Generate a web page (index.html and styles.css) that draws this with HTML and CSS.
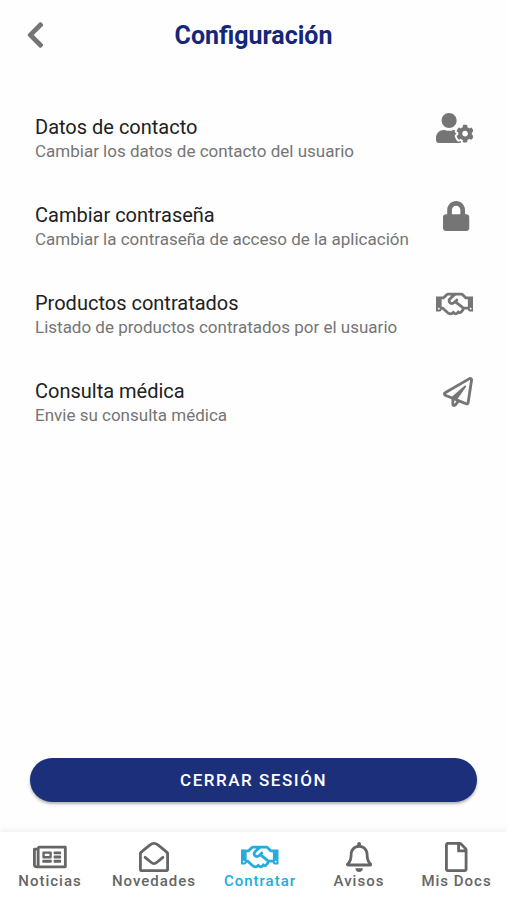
FILE: index.html
```html
<!DOCTYPE html>
<html lang="es">
<head>
    <meta charset="UTF-8">
    <meta name="viewport" content="width=device-width, initial-scale=1.0">
    <title>Configuración</title>
    <link rel="stylesheet" href="styles.css">
</head>
<body>
    <header class="header">
        <button type="button" class="back" aria-label="Volver">
            <svg class="icon" viewBox="0 0 320 512"><path d="M34.52 239.03L228.87 44.69c9.37-9.37 24.57-9.37 33.94 0l22.67 22.67c9.36 9.36 9.37 24.52.04 33.9L131.49 256l154.02 154.75c9.34 9.38 9.32 24.54-.04 33.9l-22.67 22.67c-9.37 9.37-24.57 9.37-33.94 0L34.52 272.97c-9.37-9.37-9.37-24.57 0-33.94z"/></svg>
        </button>
        <h1>Configuración</h1>
    </header>

    <main class="content">
        <nav class="options" aria-label="Opciones">
            <a class="option" href="#contacto">
                <span class="option-text">
                    <span class="option-title">Datos de contacto</span>
                    <span class="option-detail">Cambiar los datos de contacto del usuario</span>
                </span>
                <svg class="icon" viewBox="0 0 640 512"><path d="M610.5 373.3c2.6-14.1 2.6-28.5 0-42.6l25.8-14.9c3-1.7 4.3-5.2 3.3-8.5-6.7-21.6-18.2-41.2-33.2-57.4-2.3-2.5-6-3.1-9-1.4l-25.8 14.9c-10.9-9.3-23.4-16.5-36.9-21.3v-29.8c0-3.4-2.4-6.4-5.7-7.1-22.3-5-45-4.8-66.2 0-3.3.7-5.7 3.7-5.7 7.1v29.8c-13.5 4.8-26 12-36.9 21.3l-25.8-14.9c-2.9-1.7-6.7-1.1-9 1.4-15 16.2-26.5 35.8-33.2 57.4-1 3.3.4 6.8 3.3 8.5l25.8 14.9c-2.6 14.1-2.6 28.5 0 42.6l-25.8 14.9c-3 1.7-4.3 5.2-3.3 8.5 6.7 21.6 18.2 41.1 33.2 57.4 2.3 2.5 6 3.1 9 1.4l25.8-14.9c10.9 9.3 23.4 16.5 36.9 21.3v29.8c0 3.4 2.4 6.4 5.7 7.1 22.3 5 45 4.8 66.2 0 3.3-.7 5.7-3.7 5.7-7.1v-29.8c13.5-4.8 26-12 36.9-21.3l25.8 14.9c2.9 1.7 6.7 1.1 9-1.4 15-16.2 26.5-35.8 33.2-57.4 1-3.3-.4-6.8-3.3-8.5l-25.8-14.9zM496 400.5c-26.8 0-48.5-21.8-48.5-48.5s21.8-48.5 48.5-48.5 48.5 21.8 48.5 48.5-21.7 48.5-48.5 48.5zM224 256c70.7 0 128-57.3 128-128S294.7 0 224 0 96 57.3 96 128s57.3 128 128 128zm201.2 226.5c-2.3-1.2-4.6-2.6-6.8-3.9l-7.9 4.6c-6 3.4-12.8 5.3-19.6 5.3-10.9 0-21.4-4.6-28.9-12.6-18.3-19.8-32.3-43.9-40.2-69.6-5.5-17.7 1.9-36.4 17.9-45.7l7.9-4.6c-.1-2.6-.1-5.2 0-7.8l-7.9-4.6c-16-9.2-23.4-28-17.9-45.7.9-2.9 2.2-5.8 3.2-8.7-3.8-.3-7.5-1.2-11.4-1.2h-16.7c-22.2 10.2-46.9 16-72.9 16s-50.6-5.8-72.9-16h-16.7C60.2 288 0 348.2 0 422.4V464c0 26.5 21.5 48 48 48h352c10.1 0 19.5-3.2 27.2-8.5-1.2-3.8-2-7.7-2-11.8v-9.2z"/></svg>
            </a>
            <a class="option" href="#contrasena">
                <span class="option-text">
                    <span class="option-title">Cambiar contraseña</span>
                    <span class="option-detail">Cambiar la contraseña de acceso de la aplicación</span>
                </span>
                <svg class="icon" viewBox="0 0 512 512"><path d="M400 224h-24v-72C376 68.2 307.8 0 224 0S72 68.2 72 152v72H48c-26.5 0-48 21.5-48 48v192c0 26.5 21.5 48 48 48h352c26.5 0 48-21.5 48-48V272c0-26.5-21.5-48-48-48zm-104 0H152v-72c0-39.7 32.3-72 72-72s72 32.3 72 72v72z"/></svg>
            </a>
            <a class="option" href="#productos">
                <span class="option-text">
                    <span class="option-title">Productos contratados</span>
                    <span class="option-detail">Listado de productos contratados por el usuario</span>
                </span>
                <svg class="icon" viewBox="0 0 640 512"><path id="handshake" d="M519.2 127.9l-47.6-47.6A56.252 56.252 0 0 0 432 64H205.2c-14.8 0-29.1 5.9-39.6 16.3L118 127.9H0v255.7h64c17.6 0 31.8-14.2 31.9-31.7h9.1l84.6 76.4c30.9 25.1 73.8 25.7 105.6 3.8 12.5 10.8 26 15.9 41.1 15.9 18.2 0 35.3-7.4 48.8-24 22.1 8.7 48.2 2.6 64-16.8l26.2-32.3c5.6-6.9 9.1-14.8 10.9-23h57.9c.1 17.5 14.4 31.7 31.9 31.7h64V127.9H519.2zM48 351.6c-8.8 0-16-7.2-16-16s7.2-16 16-16 16 7.2 16 16c0 8.9-7.2 16-16 16zm390-6.9l-26.1 32.2c-2.8 3.4-7.8 4-11.3 1.2l-23.9-19.4-30 36.5c-6 7.3-15 4.8-18 2.4l-36.8-31.5-15.6 19.2c-13.9 17.1-39.2 19.7-55.3 6.6l-97.3-88H96V175.8h41.9l61.7-61.6c2-.8 3.7-1.5 5.7-2.3H262l-38.7 35.5c-29.4 26.9-31.1 72.3-4.4 101.3 14.8 16.2 61.2 41.2 101.5 4.4l8.2-7.5 108.2 87.8c3.4 2.8 3.9 7.9 1.2 11.3zm106-40.8h-69.2c-2.3-2.8-4.9-5.4-7.7-7.7l-102.7-83.4 12.5-11.4c6.5-6 7-16.1 1-22.6L367 167.1c-6-6.5-16.1-6.9-22.6-1l-55.2 50.6c-9.5 8.7-25.7 9.4-34.6 0-9.3-9.9-8.5-25.1 1.2-33.9l65.6-60.1c7.4-6.8 17-10.5 27-10.5l83.7-.2c2.1 0 4.1.8 5.5 2.3l61.7 61.6H544v128zm48 47.7c-8.8 0-16-7.2-16-16s7.2-16 16-16 16 7.2 16 16c0 8.9-7.2 16-16 16z"/></svg>
            </a>
            <a class="option" href="#consulta">
                <span class="option-text">
                    <span class="option-title">Consulta médica</span>
                    <span class="option-detail">Envie su consulta médica</span>
                </span>
                <svg class="icon" viewBox="0 0 512 512"><path d="M440 6.5L24 246.4c-34.4 19.9-31.1 70.8 5.7 85.9L144 379.6V464c0 46.4 59.2 65.5 86.6 28.6l43.8-59.1 111.9 46.2c5.9 2.4 12.1 3.6 18.3 3.6 8.2 0 16.3-2.1 23.6-6.2 12.8-7.2 21.6-20 23.9-34.5l59.4-387.2c6.1-40.1-36.9-68.8-71.5-48.9zM192 464v-64.6l36.6 15.1L192 464zm212.6-28.7l-153.8-63.5L391 169.5c10.7-15.5-9.5-33.5-23.7-21.2L155.8 332.6 48 288 464 48l-59.4 387.3z"/></svg>
            </a>
        </nav>

        <button type="button" class="logout">Cerrar sesión</button>
    </main>

    <nav class="tabs" aria-label="Principal">
        <a class="tab" href="#noticias">
            <svg class="icon" viewBox="0 0 576 512"><path d="M552 64H112c-20.858 0-38.643 13.377-45.248 32H24c-13.255 0-24 10.745-24 24v272c0 30.928 25.072 56 56 56h496c13.255 0 24-10.745 24-24V88c0-13.255-10.745-24-24-24zM48 392V144h16v248c0 4.411-3.589 8-8 8s-8-3.589-8-8zm480 8H111.422c.374-2.614.578-5.283.578-8V112h416v288zM172 280h136c6.627 0 12-5.373 12-12v-96c0-6.627-5.373-12-12-12H172c-6.627 0-12 5.373-12 12v96c0 6.627 5.373 12 12 12zm28-80h80v40h-80v-40zm-40 140v-24c0-6.627 5.373-12 12-12h136c6.627 0 12 5.373 12 12v24c0 6.627-5.373 12-12 12H172c-6.627 0-12-5.373-12-12zm192 0v-24c0-6.627 5.373-12 12-12h104c6.627 0 12 5.373 12 12v24c0 6.627-5.373 12-12 12H364c-6.627 0-12-5.373-12-12zm0-144v-24c0-6.627 5.373-12 12-12h104c6.627 0 12 5.373 12 12v24c0 6.627-5.373 12-12 12H364c-6.627 0-12-5.373-12-12zm0 72v-24c0-6.627 5.373-12 12-12h104c6.627 0 12 5.373 12 12v24c0 6.627-5.373 12-12 12H364c-6.627 0-12-5.373-12-12z"/></svg>
            <span>Noticias</span>
        </a>
        <a class="tab" href="#novedades">
            <svg class="icon icon-line" viewBox="0 0 512 512">
                <path d="M24 464V196c0-8 3-14 9-19C62 153 130 97 190 50c17-14 47-26 66-26s49 12 66 26c60 47 128 103 157 127 6 5 9 11 9 19v268c0 13-11 24-24 24H48c-13 0-24-11-24-24z"/>
                <path d="M104 262l96 79c18 15 38 27 56 27s38-12 56-27l96-79"/>
            </svg>
            <span>Novedades</span>
        </a>
        <a class="tab tab-active" href="#contratar" aria-current="page">
            <svg class="icon" viewBox="0 0 640 512"><use href="#handshake"/></svg>
            <span>Contratar</span>
        </a>
        <a class="tab" href="#avisos">
            <svg class="icon" viewBox="0 0 448 512"><path d="M439.39 362.29c-19.32-20.76-55.47-51.99-55.47-154.29 0-77.7-54.48-139.9-127.94-155.16V32c0-17.67-14.32-32-31.98-32s-31.98 14.33-31.98 32v20.84C118.56 68.1 64.08 130.3 64.08 208c0 102.3-36.15 133.53-55.47 154.29-6 6.45-8.66 14.16-8.61 21.71.11 16.4 12.98 32 32.1 32h383.8c19.12 0 32-15.6 32.1-32 .05-7.55-2.61-15.27-8.61-21.71zM67.53 368c21.22-27.97 44.42-74.33 44.53-159.42 0-.2-.06-.38-.06-.58 0-61.86 50.14-112 112-112s112 50.14 112 112c0 .2-.06.38-.06.58.11 85.1 23.31 131.46 44.53 159.42H67.53zM224 512c35.32 0 63.97-28.65 63.97-64H160.03c0 35.35 28.65 64 63.97 64z"/></svg>
            <span>Avisos</span>
        </a>
        <a class="tab" href="#docs">
            <svg class="icon" viewBox="0 0 384 512"><path d="M369.9 97.9L286 14C277 5 264.8-.1 252.1-.1H48C21.5 0 0 21.5 0 48v416c0 26.5 21.5 48 48 48h288c26.5 0 48-21.5 48-48V131.9c0-12.7-5.1-25-14.1-34zM332.1 128H256V51.9l76.1 76.1zM48 464V48h160v104c0 13.3 10.7 24 24 24h104v288H48z"/></svg>
            <span>Mis Docs</span>
        </a>
    </nav>
</body>
</html>
```
FILE: styles.css
```css
* {
    box-sizing: border-box;
}

body {
    margin: 0;
    min-height: 100vh;
    display: flex;
    flex-direction: column;
    font-family: Roboto, "Liberation Sans", sans-serif;
    background-color: #fefefe;
    color: #212121;
}

a {
    color: inherit;
    text-decoration: none;
}

.icon {
    display: block;
    height: 30px;
    flex-shrink: 0;
    fill: currentColor;
}

.icon-line {
    fill: none;
    stroke: currentColor;
    stroke-width: 48;
    stroke-linecap: round;
    stroke-linejoin: round;
}

/* --- Cabecera --- */
.header {
    display: grid;
    grid-template-columns: 20px 1fr 20px;
    align-items: center;
    height: 70px;
    padding: 0 26px;
}

.header h1 {
    margin: 0;
    font-size: 25px;
    font-weight: 700;
    text-align: center;
    color: #16277a;
}

.back {
    padding: 0;
    border: 0;
    background: none;
    color: #757575;
    cursor: pointer;
}

/* --- Opciones --- */
.content {
    flex: 1;
    display: flex;
    flex-direction: column;
    justify-content: space-between;
    padding: 28px 30px 30px;
}

.option {
    display: flex;
    justify-content: space-between;
    height: 88px;
    padding: 15px 4px 0 5px;
}

.option-text {
    display: flex;
    flex-direction: column;
}

.option-title {
    font-size: 20px;
    line-height: 28px;
}

.option-detail {
    font-size: 17px;
    line-height: 20px;
    color: #757575;
}

.option .icon {
    color: #757575;
}

.logout {
    height: 44px;
    border: 0;
    border-radius: 22px;
    background-color: #1b2f7b;
    color: #fff;
    font-family: inherit;
    font-size: 17px;
    font-weight: 500;
    letter-spacing: 0.09em;
    text-transform: uppercase;
    box-shadow: 0 2px 3px rgba(0, 0, 0, 0.3);
    cursor: pointer;
}

/* --- Barra inferior --- */
.tabs {
    display: grid;
    grid-template-columns: 100fr 108fr 104fr 94fr 101fr;
    height: 68px;
    padding-top: 10px;
    background-color: #fff;
    box-shadow: 0 -3px 3px rgba(0, 0, 0, 0.04);
}

.tab {
    display: flex;
    flex-direction: column;
    align-items: center;
    font-size: 15px;
    font-weight: 500;
    line-height: 18px;
    letter-spacing: 1px;
    color: #666;
}

.tab-active {
    color: #24acdc;
}
```
